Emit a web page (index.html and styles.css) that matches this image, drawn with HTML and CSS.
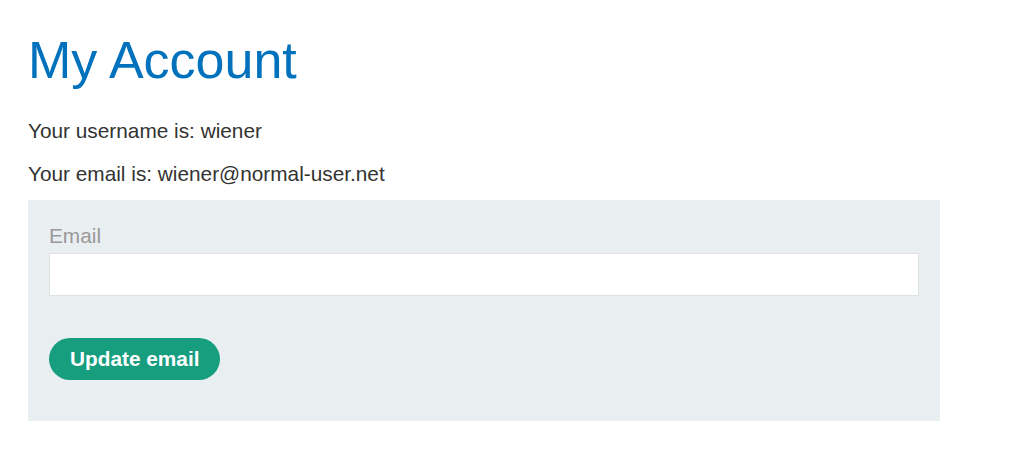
FILE: index.html
```html
<!DOCTYPE html>
<html>
<head>
<meta charset="utf-8">
<link rel="stylesheet" href="styles.css">
</head>
<body>
<div class="page">
  <h1 class="title">My Account</h1>
  <p class="info">Your username is: wiener</p>
  <p class="info">Your email is: wiener@normal-user.net</p>
  <form class="panel">
    <label class="label">Email</label>
    <input class="field" type="email" name="email">
    <button class="btn" type="button">Update email</button>
  </form>
</div>
</body>
</html>
```
FILE: styles.css
```css
* { box-sizing: border-box; }
body {
  margin: 0;
  background: #fff;
  font-family: "Liberation Sans", Arial, sans-serif;
  font-size: 20.8px;
  color: #333332;
}
.page {
  padding: 28px 28px 0 28px;
  width: 968px;
}
.title {
  margin: 0 0 24px 0;
  font-weight: 400;
  font-size: 52px;
  line-height: 64px;
  color: #0071bc;
}
.info {
  margin: 0 0 14px 0;
  font-size: 20.8px;
  line-height: 29px;
}
.info + .info { margin-bottom: 12px; }
.panel {
  background: #e9eef1;
  padding: 21px 21px 41px 21px;
  display: flex;
  flex-direction: column;
  align-items: flex-start;
}
.label {
  font-size: 20.8px;
  line-height: 29px;
  color: #999;
}
.field {
  width: 100%;
  height: 43px;
  border: 1px solid #dfe2e5;
  background: #fff;
  margin: 3px 0 42px 0;
}
.btn {
  font-family: inherit;
  font-weight: 700;
  font-size: 20.8px;
  color: #fff;
  background: #179e7f;
  border: none;
  border-radius: 21px;
  height: 42px;
  padding: 0 21px;
}
```
